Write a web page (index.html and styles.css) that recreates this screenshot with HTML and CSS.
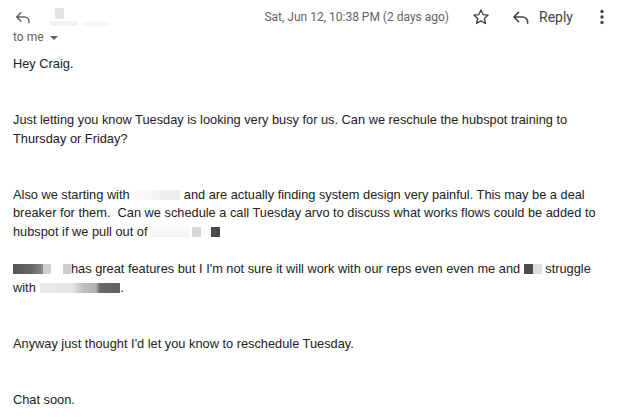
FILE: index.html
```html
<!DOCTYPE html>
<html>
<head>
<meta charset="utf-8">
<link rel="stylesheet" href="styles.css">
</head>
<body>
<div class="mail">
  <div class="head">
    <div class="left">
      <svg class="icon back" width="18" height="18" viewBox="0 0 24 24"><path d="M9 6.5L3.5 12 9 17.5M3.5 12H14a6 6 0 0 1 6 6v1.5" fill="none" stroke="#5f6368" stroke-width="1.9" stroke-linecap="round" stroke-linejoin="round"/></svg>
      <span class="sender"><span class="sq"></span><span class="bl1"></span><span class="bl2"></span></span>
    </div>
    <div class="right">
      <span class="date">Sat, Jun 12, 10:38 PM (2 days ago)</span>
      <svg class="icon star" width="20" height="20" viewBox="0 0 24 24"><path d="M12 3.5l2.5 5.6 6.1.6-4.6 4.1 1.3 6-5.3-3.1-5.3 3.1 1.3-6-4.6-4.1 6.1-.6z" fill="none" stroke="#3c4043" stroke-width="1.6" stroke-linejoin="round"/></svg>
      <span class="reply">
        <svg class="icon" width="20" height="20" viewBox="0 0 24 24"><path d="M9 6.5L3.5 12 9 17.5M3.5 12H14a6 6 0 0 1 6 6v1.5" fill="none" stroke="#444" stroke-width="1.9" stroke-linecap="round" stroke-linejoin="round"/></svg>
        <span class="rtext">Reply</span>
      </span>
      <svg class="icon more" width="6" height="18" viewBox="0 0 6 18"><circle cx="3" cy="3.5" r="1.7" fill="#444"/><circle cx="3" cy="9" r="1.7" fill="#444"/><circle cx="3" cy="14.5" r="1.7" fill="#444"/></svg>
    </div>
  </div>
  <div class="tome">to me <span class="caret"></span></div>
  <div class="body">
    <p class="p1">Hey Craig.</p>
    <p class="p3">Just letting you know Tuesday is looking very busy for us. Can we reschule the hubspot training to<br>Thursday or Friday?</p>
    <p class="p3">Also we starting with <span class="blur b-a"></span> and are actually finding system design very painful. This may be a deal<br>breaker for them.&nbsp; Can we schedule a call Tuesday arvo to discuss what works flows could be added to<br>hubspot if we pull out of <span class="blur b-b"></span><span class="blur sq-l"></span><span class="blur sq-d"></span></p>
    <p class="p2"><span class="blur b-c"></span><span class="blur b-c2"></span><span class="blur b-c3"></span>has great features but I I'm not sure it will work with our reps even even me and <span class="blur b-d"></span><span class="blur b-d2"></span> struggle<br>with <span class="blur b-e"></span>.</p>
    <p class="p3">Anyway just thought I'd let you know to reschedule Tuesday.</p>
    <p class="p3">Chat soon.</p>
  </div>
</div>
</body>
</html>
```
FILE: styles.css
```css
html, body {
  margin: 0;
  padding: 0;
  background: #fff;
}
.mail {
  font-family: "Liberation Sans", Arial, sans-serif;
  color: #222;
  width: 624px;
  height: 417px;
  overflow: hidden;
}
.head {
  display: flex;
  justify-content: space-between;
  align-items: center;
  height: 34px;
}
.left {
  display: flex;
  align-items: center;
  padding-left: 14px;
}
.icon {
  display: block;
}
.sender {
  display: flex;
  align-items: flex-end;
  margin-left: 13px;
  height: 18px;
}
.sender .sq {
  display: block;
  width: 9px;
  height: 11px;
  background: #e4e4e4;
  margin-left: 10px;
  align-self: flex-start;
}
.sender .bl1 {
  display: block;
  width: 28px;
  height: 5px;
  background: #f2f2f2;
  margin-left: -14px;
}
.sender .bl2 {
  display: block;
  width: 28px;
  height: 4px;
  background: #f6f6f6;
  margin-left: 4px;
}
.right {
  display: flex;
  align-items: center;
  padding-right: 19px;
}
.date {
  font-size: 12px;
  color: #5f6368;
  margin-right: 22px;
  font-family: Roboto, "Liberation Sans", Arial, sans-serif;
}
.star {
  margin-right: 20px;
}
.reply {
  display: flex;
  align-items: center;
  margin-right: 26px;
}
.rtext {
  font-family: Roboto, "Liberation Sans", Arial, sans-serif;
  font-size: 14px;
  color: #444;
  margin-left: 8px;
}
.tome {
  font-size: 12px;
  color: #5f6368;
  padding-left: 13px;
  height: 16px;
  line-height: 16px;
  margin-top: -5px;
  font-family: Roboto, "Liberation Sans", Arial, sans-serif;
}
.caret {
  display: inline-block;
  width: 0;
  height: 0;
  border-left: 4px solid transparent;
  border-right: 4px solid transparent;
  border-top: 4px solid #5f6368;
  vertical-align: middle;
  margin-left: 3px;
}
.body {
  padding: 0 13px;
  font-size: 12.8px;
  line-height: 18.65px;
  margin-top: 10px;
}
.body p {
  margin: 0;
  white-space: nowrap;
}
.p3 {
  padding-top: 37.3px;
}
.p2 {
  padding-top: 18.65px;
}
.blur {
  display: inline-block;
  height: 10px;
  vertical-align: -1px;
}
.b-a {
  width: 47px;
  background: linear-gradient(90deg, #fafafa 0%, #f5f5f5 55%, #ececec 60%, #ececec 100%);
}
.b-b {
  width: 38px;
  height: 12px;
  background: linear-gradient(180deg, #fafafa, #f4f4f4);
}
.sq-l {
  width: 9px;
  background: #d6d6d6;
  margin-left: 3px;
}
.sq-d {
  width: 9px;
  background: #4a4a4a;
  margin-left: 10px;
}
.b-c {
  width: 30px;
  background: linear-gradient(90deg, #555 0%, #666 60%, #8a8a8a 100%);
}
.b-c2 {
  width: 8px;
  background: #cfcfcf;
}
.b-c3 {
  width: 8px;
  background: #cdcdcd;
  margin-left: 12px;
}
.b-d {
  width: 9px;
  background: #4d4d4d;
}
.b-d2 {
  width: 9px;
  background: #dcdcdc;
}
.b-e {
  width: 80px;
  background: linear-gradient(90deg, #eaeaea 0%, #e6e6e6 40%, #bdbdbd 55%, #b0b0b0 70%, #6a6a6a 75%, #5f5f5f 100%);
  margin-left: 1px;
}
```
